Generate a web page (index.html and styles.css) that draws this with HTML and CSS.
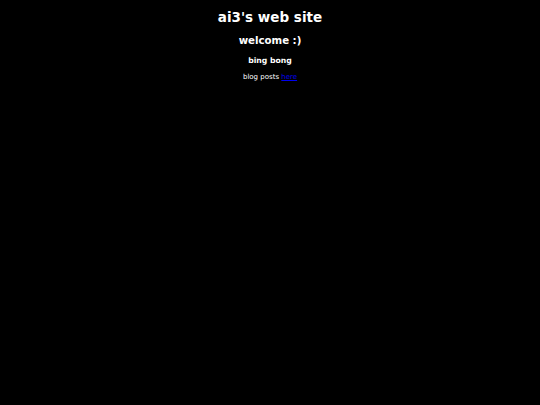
FILE: index.html
```html
<!DOCTYPE html>
<html>
<head>
<meta charset="utf-8">
<link rel="stylesheet" href="styles.css">
</head>
<body class="page">
<h1 class="title">ai3's web site</h1>
<h2 class="welcome">welcome :)</h2>
<h3 class="bing">bing bong</h3>
<p class="posts">blog posts <a class="link" href="#">here</a></p>
</body>
</html>
```
FILE: styles.css
```css
html { background: #000; }
.page {
  margin: 0;
  padding: 10px 4px 0;
  background: #000;
  color: #fff;
  font-family: "DejaVu Sans", sans-serif;
  font-size: 8px;
  text-align: center;
}
.title { font-size: 13.5px; line-height: 15px; margin: 0 0 10px; }
.welcome { font-size: 10.2px; line-height: 12px; margin: 0 0 8.5px; }
.bing { font-size: 7.7px; line-height: 9px; margin: 0 0 8.5px; }
.posts { font-size: 7px; line-height: 8px; margin: 0; }
.link { color: #00e; }
```
